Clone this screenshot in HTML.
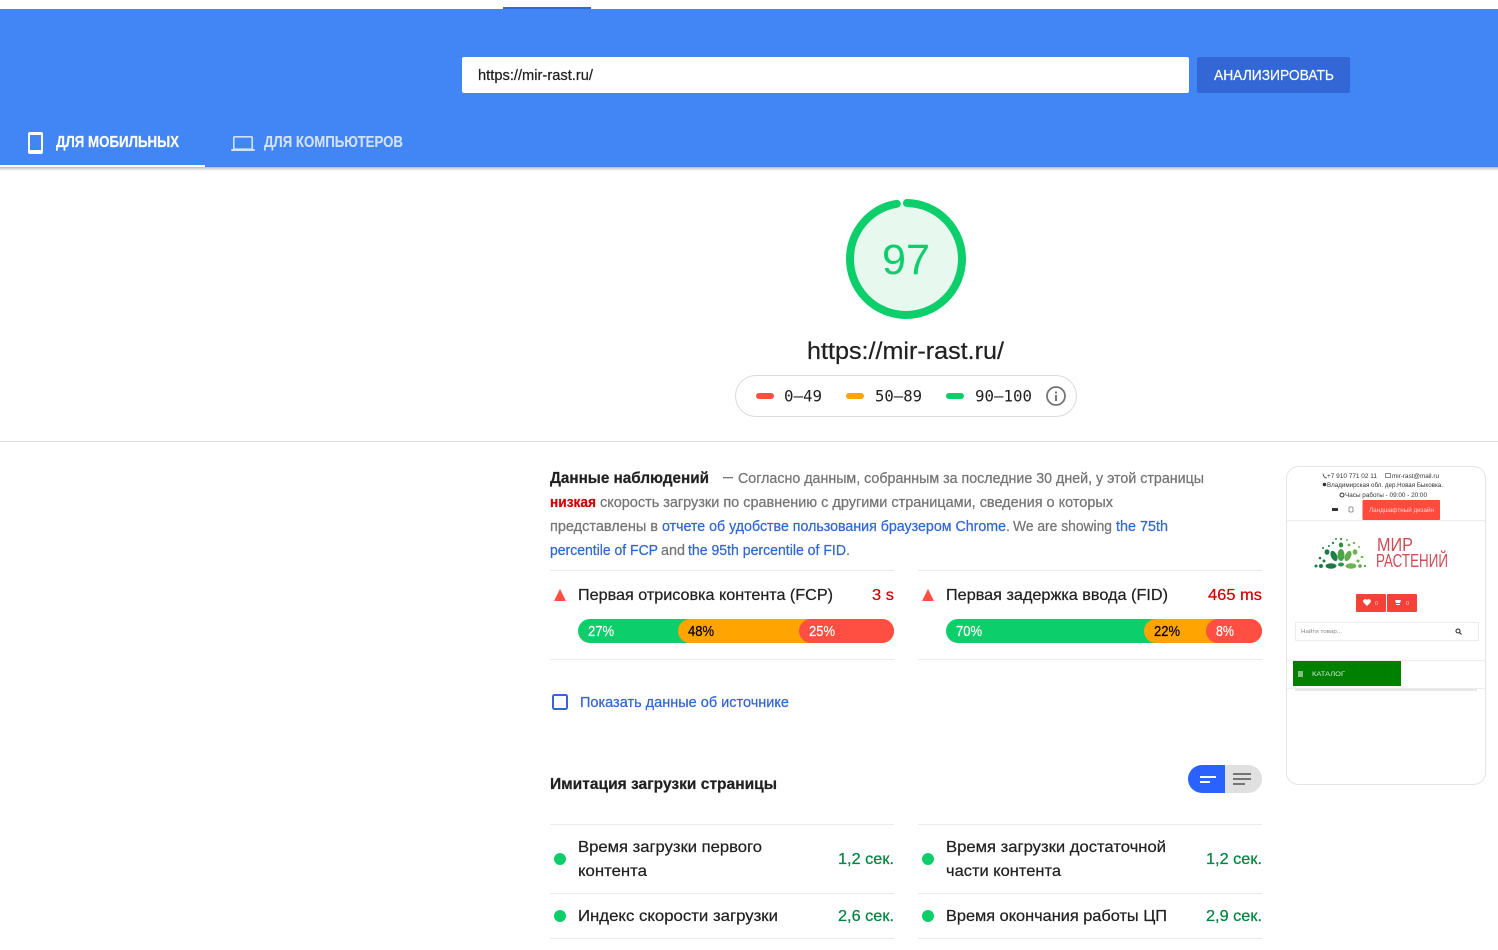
<!DOCTYPE html>
<html lang="ru"><head><meta charset="utf-8"><title>PageSpeed Insights</title>
<style>
html,body{margin:0;padding:0;background:#fff;width:1498px;height:950px;overflow:hidden}
svg{display:block;font-family:"Liberation Sans",sans-serif}
.m{font-family:"DejaVu Sans Mono",monospace}
text[fill="#212121"]{stroke:#212121;stroke-width:.22}
text[fill="#757575"]{stroke:#757575;stroke-width:.25}
text[fill="#3367d6"]{stroke:#3367d6;stroke-width:.25}
text[fill="#018642"]{stroke:#018642;stroke-width:.25}
text[fill="#d50000"]{stroke:#d50000;stroke-width:.22}
text[fill="#000"]{stroke:#000;stroke-width:.22}
text[fill="#fff"]{stroke:#fff;stroke-width:.2}
text[fill="#d3e2fc"]{stroke:#d3e2fc;stroke-width:.1}
.thumb{filter:blur(.35px)}
</style></head><body>
<svg width="1498" height="950" viewBox="0 0 1498 950" xmlns="http://www.w3.org/2000/svg">
<defs>
<linearGradient id="sh" x1="0" y1="0" x2="0" y2="1"><stop offset="0" stop-color="#bbb"/><stop offset="1" stop-color="#fff"/></linearGradient>
<linearGradient id="sh2" x1="0" y1="0" x2="0" y2="1"><stop offset="0" stop-color="#ddd"/><stop offset="1" stop-color="#fff"/></linearGradient>
</defs>
<rect width="1498" height="950" fill="#fff"/>
<!-- header -->
<rect x="0" y="9" width="1498" height="158" fill="#4285f4"/>
<rect x="503" y="7" width="88" height="2" fill="#3367d6"/>
<rect x="0" y="167" width="1498" height="4" fill="url(#sh)"/>
<rect x="462" y="57" width="727" height="36" rx="2" fill="#fff"/>
<text x="478" y="80" font-size="14.500" fill="#212121" textLength="115" lengthAdjust="spacingAndGlyphs">https://mir-rast.ru/</text>
<rect x="1197" y="57" width="153" height="36" rx="2" fill="#3367d6"/>
<text x="1214" y="80" font-size="15" fill="#fff" textLength="120" lengthAdjust="spacingAndGlyphs">АНАЛИЗИРОВАТЬ</text>
<!-- tabs -->
<path fill="#fff" fill-rule="evenodd" d="M30 132h11a2 2 0 0 1 2 2v18a2 2 0 0 1-2 2H30a2 2 0 0 1-2-2v-18a2 2 0 0 1 2-2zm0 3v15h11v-15z"/>
<text x="56" y="147" font-size="15.500" font-weight="700" fill="#fff" textLength="123" lengthAdjust="spacingAndGlyphs">ДЛЯ МОБИЛЬНЫХ</text>
<rect x="0" y="165" width="205" height="2" fill="#fff"/>
<path fill="none" stroke="#d3e2fc" stroke-width="1.600" d="M234.800 136.800h16.400a1 1 0 0 1 1 1v10.400a1 1 0 0 1-1 1h-16.400a1 1 0 0 1-1-1v-10.400a1 1 0 0 1 1-1z"/>
<rect x="231" y="149" width="24" height="2" rx="1" fill="#d3e2fc"/>
<text x="264" y="147" font-size="15.500" font-weight="700" fill="#d3e2fc" textLength="139" lengthAdjust="spacingAndGlyphs">ДЛЯ КОМПЬЮТЕРОВ</text>
<!-- gauge -->
<circle cx="906" cy="259" r="56" fill="#e7f9ef"/>
<circle cx="906" cy="259" r="56" fill="none" stroke="#0cce6b" stroke-width="8" stroke-linecap="round" stroke-dasharray="341.300 351.900" transform="rotate(-89 906 259)"/>
<text x="906" y="274" text-anchor="middle" font-size="43" fill="#0cce6b" textLength="48" lengthAdjust="spacingAndGlyphs">97</text>
<text x="807" y="359" font-size="24" fill="#212121" textLength="197" lengthAdjust="spacingAndGlyphs">https://mir-rast.ru/</text>
<!-- legend -->
<rect x="735.500" y="375.500" width="341" height="41" rx="20.500" fill="#fff" stroke="#dbdbdb"/>
<rect x="756" y="393" width="18" height="6" rx="3" fill="#ff4e42"/>
<text x="784" y="401.500" class="m" font-size="16" fill="#212121" style="stroke-width:0" textLength="38" lengthAdjust="spacingAndGlyphs">0—49</text>
<rect x="846" y="393" width="18" height="6" rx="3" fill="#ffa400"/>
<text x="875" y="401.500" class="m" font-size="16" fill="#212121" style="stroke-width:0" textLength="47" lengthAdjust="spacingAndGlyphs">50—89</text>
<rect x="946" y="393" width="18" height="6" rx="3" fill="#0cce6b"/>
<text x="975" y="401.500" class="m" font-size="16" fill="#212121" style="stroke-width:0" textLength="57" lengthAdjust="spacingAndGlyphs">90—100</text>
<circle cx="1056" cy="396" r="9" fill="none" stroke="#757575" stroke-width="1.800"/>
<rect x="1055" y="395" width="2" height="6" fill="#757575"/><rect x="1055" y="391.500" width="2" height="2" fill="#757575"/>
<rect x="0" y="441" width="1498" height="1" fill="#dcdcdc"/>
<!-- description -->
<text x="550" y="483" font-size="16" font-weight="700" fill="#212121" textLength="159" lengthAdjust="spacingAndGlyphs">Данные наблюдений</text>
<rect x="723" y="477" width="10" height="1.300" fill="#757575"/>
<text x="738" y="483" font-size="14.500" fill="#757575" textLength="466" lengthAdjust="spacingAndGlyphs">Согласно данным, собранным за последние 30 дней, у этой страницы</text>
<text x="550" y="507" font-size="14.500" font-weight="700" fill="#d50000" textLength="46" lengthAdjust="spacingAndGlyphs">низкая</text>
<text x="600" y="507" font-size="14.500" fill="#757575" textLength="513" lengthAdjust="spacingAndGlyphs">скорость загрузки по сравнению с другими страницами, сведения о которых</text>
<text x="550" y="531" font-size="14.500" fill="#757575" textLength="108" lengthAdjust="spacingAndGlyphs">представлены в</text>
<text x="662" y="531" font-size="14.500" fill="#3367d6" textLength="344" lengthAdjust="spacingAndGlyphs">отчете об удобстве пользования браузером Chrome</text>
<text x="1006" y="531" font-size="14" fill="#757575">.</text>
<text x="1013" y="531" font-size="14.500" fill="#757575" textLength="99" lengthAdjust="spacingAndGlyphs">We are showing</text>
<text x="1116" y="531" font-size="14.500" fill="#3367d6" textLength="52" lengthAdjust="spacingAndGlyphs">the 75th</text>
<text x="550" y="555" font-size="14.500" fill="#3367d6" textLength="108" lengthAdjust="spacingAndGlyphs">percentile of FCP</text>
<text x="661" y="555" font-size="14.500" fill="#757575" textLength="24" lengthAdjust="spacingAndGlyphs">and</text>
<text x="688" y="555" font-size="14.500" fill="#3367d6" textLength="158" lengthAdjust="spacingAndGlyphs">the 95th percentile of FID</text>
<text x="846" y="555" font-size="14" fill="#757575">.</text>
<!-- field metrics -->
<rect x="550" y="570" width="344" height="1" fill="#ebebeb"/>
<rect x="918" y="570" width="344" height="1" fill="#ebebeb"/>
<path d="M554 601L560 589l6 12z" fill="#ff4e42"/>
<path d="M922 601L928 589l6 12z" fill="#ff4e42"/>
<text x="578" y="600" font-size="16" fill="#212121" textLength="255" lengthAdjust="spacingAndGlyphs">Первая отрисовка контента (FCP)</text>
<text x="872" y="600" font-size="16" fill="#d50000" textLength="22" lengthAdjust="spacingAndGlyphs">3 s</text>
<text x="946" y="600" font-size="16" fill="#212121" textLength="222" lengthAdjust="spacingAndGlyphs">Первая задержка ввода (FID)</text>
<text x="1208" y="600" font-size="16" fill="#d50000" textLength="54" lengthAdjust="spacingAndGlyphs">465 ms</text>
<!-- bars FCP -->
<rect x="578" y="619" width="316" height="24" rx="12" fill="#0cce6b"/>
<rect x="678" y="619" width="216" height="24" rx="12" fill="#ffa400"/>
<rect x="799" y="619" width="95" height="24" rx="12" fill="#ff4e42"/>
<text x="588" y="636" font-size="14.500" fill="#fff" textLength="26" lengthAdjust="spacingAndGlyphs">27%</text>
<text x="688" y="636" font-size="14.500" fill="#000" textLength="26" lengthAdjust="spacingAndGlyphs">48%</text>
<text x="809" y="636" font-size="14.500" fill="#fff" textLength="26" lengthAdjust="spacingAndGlyphs">25%</text>
<!-- bars FID -->
<rect x="946" y="619" width="316" height="24" rx="12" fill="#0cce6b"/>
<rect x="1144" y="619" width="118" height="24" rx="12" fill="#ffa400"/>
<rect x="1206" y="619" width="56" height="24" rx="12" fill="#ff4e42"/>
<text x="956" y="636" font-size="14.500" fill="#fff" textLength="26" lengthAdjust="spacingAndGlyphs">70%</text>
<text x="1154" y="636" font-size="14.500" fill="#000" textLength="26" lengthAdjust="spacingAndGlyphs">22%</text>
<text x="1216" y="636" font-size="14.500" fill="#fff" textLength="18" lengthAdjust="spacingAndGlyphs">8%</text>
<rect x="550" y="659" width="344" height="1" fill="#ebebeb"/>
<rect x="918" y="659" width="344" height="1" fill="#ebebeb"/>
<!-- checkbox -->
<rect x="553" y="695" width="14" height="14" rx="1.500" fill="none" stroke="#3367d6" stroke-width="2"/>
<text x="580" y="707" font-size="14.500" fill="#3367d6" textLength="209" lengthAdjust="spacingAndGlyphs">Показать данные об источнике</text>
<!-- lab header -->
<text x="550" y="789" font-size="16" font-weight="700" fill="#212121" textLength="227" lengthAdjust="spacingAndGlyphs">Имитация загрузки страницы</text>
<path d="M1225 765h-23a14 14 0 0 0 0 28h23z" fill="#2962ff"/>
<path d="M1225 765h23a14 14 0 0 1 0 28h-23z" fill="#e0e0e0"/>
<rect x="1200" y="776" width="16" height="2" fill="#fff"/><rect x="1200" y="781" width="10" height="2" fill="#fff"/>
<rect x="1233" y="773" width="18" height="2" fill="#757575"/><rect x="1233" y="778" width="18" height="2" fill="#757575"/><rect x="1233" y="783" width="12" height="2" fill="#757575"/>
<!-- lab metrics -->
<rect x="550" y="824" width="344" height="1" fill="#ebebeb"/>
<rect x="918" y="824" width="344" height="1" fill="#ebebeb"/>
<circle cx="560" cy="859" r="6" fill="#0cce6b"/>
<text x="578" y="852" font-size="16" fill="#212121" textLength="184" lengthAdjust="spacingAndGlyphs">Время загрузки первого</text>
<text x="578" y="876" font-size="16" fill="#212121" textLength="69" lengthAdjust="spacingAndGlyphs">контента</text>
<text x="838" y="864" font-size="16" fill="#018642" textLength="56" lengthAdjust="spacingAndGlyphs">1,2 сек.</text>
<circle cx="928" cy="859" r="6" fill="#0cce6b"/>
<text x="946" y="852" font-size="16" fill="#212121" textLength="220" lengthAdjust="spacingAndGlyphs">Время загрузки достаточной</text>
<text x="946" y="876" font-size="16" fill="#212121" textLength="115" lengthAdjust="spacingAndGlyphs">части контента</text>
<text x="1206" y="864" font-size="16" fill="#018642" textLength="56" lengthAdjust="spacingAndGlyphs">1,2 сек.</text>
<rect x="550" y="893" width="344" height="1" fill="#ebebeb"/>
<rect x="918" y="893" width="344" height="1" fill="#ebebeb"/>
<circle cx="560" cy="916" r="6" fill="#0cce6b"/>
<text x="578" y="921" font-size="16" fill="#212121" textLength="200" lengthAdjust="spacingAndGlyphs">Индекс скорости загрузки</text>
<text x="838" y="921" font-size="16" fill="#018642" textLength="56" lengthAdjust="spacingAndGlyphs">2,6 сек.</text>
<circle cx="928" cy="916" r="6" fill="#0cce6b"/>
<text x="946" y="921" font-size="16" fill="#212121" textLength="221" lengthAdjust="spacingAndGlyphs">Время окончания работы ЦП</text>
<text x="1206" y="921" font-size="16" fill="#018642" textLength="56" lengthAdjust="spacingAndGlyphs">2,9 сек.</text>
<rect x="550" y="938" width="344" height="1" fill="#ebebeb"/>
<rect x="918" y="938" width="344" height="1" fill="#ebebeb"/>
<!-- thumbnail -->
<rect x="1286.500" y="466.500" width="199" height="318" rx="12" fill="#fff" stroke="#e4e4e4"/>
<g class="thumb">
<path d="M1323 473.500c0 2.500 1.500 4.500 4 4.500" fill="none" stroke="#444" stroke-width=".8"/>
<text x="1327" y="478" font-size="6.300" fill="#333" textLength="50" lengthAdjust="spacingAndGlyphs">+7 910 771 02 11</text>
<rect x="1385.500" y="473.500" width="5" height="4" fill="none" stroke="#444" stroke-width=".6"/>
<text x="1392" y="478" font-size="6.300" fill="#333" textLength="47" lengthAdjust="spacingAndGlyphs">mir-rast@mail.ru</text>
<circle cx="1324.500" cy="484.500" r="1.800" fill="#333"/>
<text x="1327" y="487" font-size="6.300" fill="#333" textLength="116" lengthAdjust="spacingAndGlyphs">Владимирская обл. дер.Новая Быковка.</text>
<circle cx="1342" cy="495" r="2" fill="none" stroke="#333"/>
<text x="1345" y="497" font-size="6.300" fill="#333" textLength="82" lengthAdjust="spacingAndGlyphs">Часы работы - 09:00 - 20:00</text>
<rect x="1332" y="508" width="6" height="3" fill="#333"/>
<rect x="1349" y="507" width="4" height="5" rx="1" fill="none" stroke="#777" stroke-width=".8"/>
<rect x="1362.500" y="500" width="77.500" height="20" rx="1" fill="#ff4a3d"/>
<text x="1369" y="512" font-size="6" fill="#ffd5d0" textLength="65" lengthAdjust="spacingAndGlyphs">Ландшафтный дизайн</text>
<rect x="1287" y="520" width="198" height="1" fill="#ececec"/>
<!-- logo -->
<ellipse cx="1341" cy="545" rx="2.200" ry="2.500" fill="#2e8b45"/>
<ellipse cx="1341" cy="555" rx="3.500" ry="6" fill="#4aa546"/>
<ellipse cx="1334" cy="556" rx="3" ry="5.500" transform="rotate(-25 1334 556)" fill="#1f7f46"/>
<ellipse cx="1348" cy="556" rx="3" ry="5.500" transform="rotate(25 1348 556)" fill="#63ae4a"/>
<ellipse cx="1327" cy="552" rx="2.400" ry="2.800" fill="#1c7a46"/>
<ellipse cx="1355" cy="552" rx="2.400" ry="2.800" fill="#6db552"/>
<ellipse cx="1331" cy="566" rx="5.500" ry="2.700" fill="#1c7a46"/>
<ellipse cx="1351" cy="566" rx="5.500" ry="2.700" fill="#6db552"/>
<ellipse cx="1341" cy="564.500" rx="3" ry="2" fill="#2f8f4d"/>
<circle cx="1316" cy="566" r="1.500" fill="#1c7a46"/><circle cx="1321" cy="566" r="2" fill="#1c7a46"/><circle cx="1360" cy="566" r="1.800" fill="#5aa84a"/><circle cx="1365" cy="566" r="1.200" fill="#5aa84a"/>
<circle cx="1320" cy="558" r="1.300" fill="#1c7a46"/><circle cx="1324" cy="561" r="1.500" fill="#1c7a46"/><circle cx="1358" cy="561" r="1.500" fill="#6db552"/><circle cx="1362" cy="557" r="1.300" fill="#6db552"/>
<circle cx="1323" cy="548" r="1" fill="#1c7a46"/><circle cx="1333" cy="543" r="1.200" fill="#2e8b45"/><circle cx="1336" cy="539" r="1" fill="#2e8b45"/><circle cx="1341" cy="539" r="1.100" fill="#2e8b45"/><circle cx="1347" cy="540" r="1" fill="#6db552"/><circle cx="1349" cy="545" r="1.400" fill="#6db552"/><circle cx="1354" cy="543" r="1.200" fill="#6db552"/><circle cx="1359" cy="547" r="1" fill="#6db552"/><circle cx="1329" cy="546" r="1" fill="#1c7a46"/>
<text x="1377" y="551" font-size="18" fill="#cb4f58" textLength="36" lengthAdjust="spacingAndGlyphs">МИР</text>
<text x="1376" y="567" font-size="18" fill="#cb4f58" textLength="72" lengthAdjust="spacingAndGlyphs">РАСТЕНИЙ</text>
<!-- thumb buttons -->
<rect x="1356" y="594" width="30" height="18" rx="1" fill="#f44336"/>
<rect x="1387" y="594" width="30" height="18" rx="1" fill="#f44336"/>
<path d="M1367 606l-3.500-3.500a2 2 0 0 1 3.500-2.500a2 2 0 0 1 3.500 2.500z" fill="#fff"/>
<text x="1375" y="605" font-size="5.500" fill="#ffc9c4">0</text>
<path d="M1395 600h6l-1 3h-4zM1396 604h4v1h-4z" fill="#fff"/>
<text x="1406" y="605" font-size="5.500" fill="#ffc9c4">0</text>
<rect x="1295.500" y="622.500" width="183" height="18" fill="#fff" stroke="#ececec"/>
<text x="1301" y="633" font-size="5.500" fill="#888" textLength="41" lengthAdjust="spacingAndGlyphs">Найти товар...</text>
<circle cx="1458" cy="631" r="2" fill="none" stroke="#222" stroke-width="1"/><path d="M1459.500 632.500l2 2" stroke="#222" stroke-width="1"/>
<rect x="1287" y="660" width="198" height="1" fill="#ececec"/>
<rect x="1293" y="661" width="108" height="25" fill="#008000"/>
<rect x="1298" y="671.500" width="5" height="1" fill="#fff"/><rect x="1298" y="673.500" width="5" height="1" fill="#fff"/><rect x="1298" y="675.500" width="5" height="1" fill="#fff"/>
<text x="1312" y="676" font-size="6" fill="#d9ecd9" textLength="33" lengthAdjust="spacingAndGlyphs">КАТАЛОГ</text>
<rect x="1295" y="689" width="182" height="3" fill="url(#sh2)"/>
<rect x="1287" y="688" width="198" height="1" fill="#eeeeee"/>
</g>
</svg>
</body></html>
